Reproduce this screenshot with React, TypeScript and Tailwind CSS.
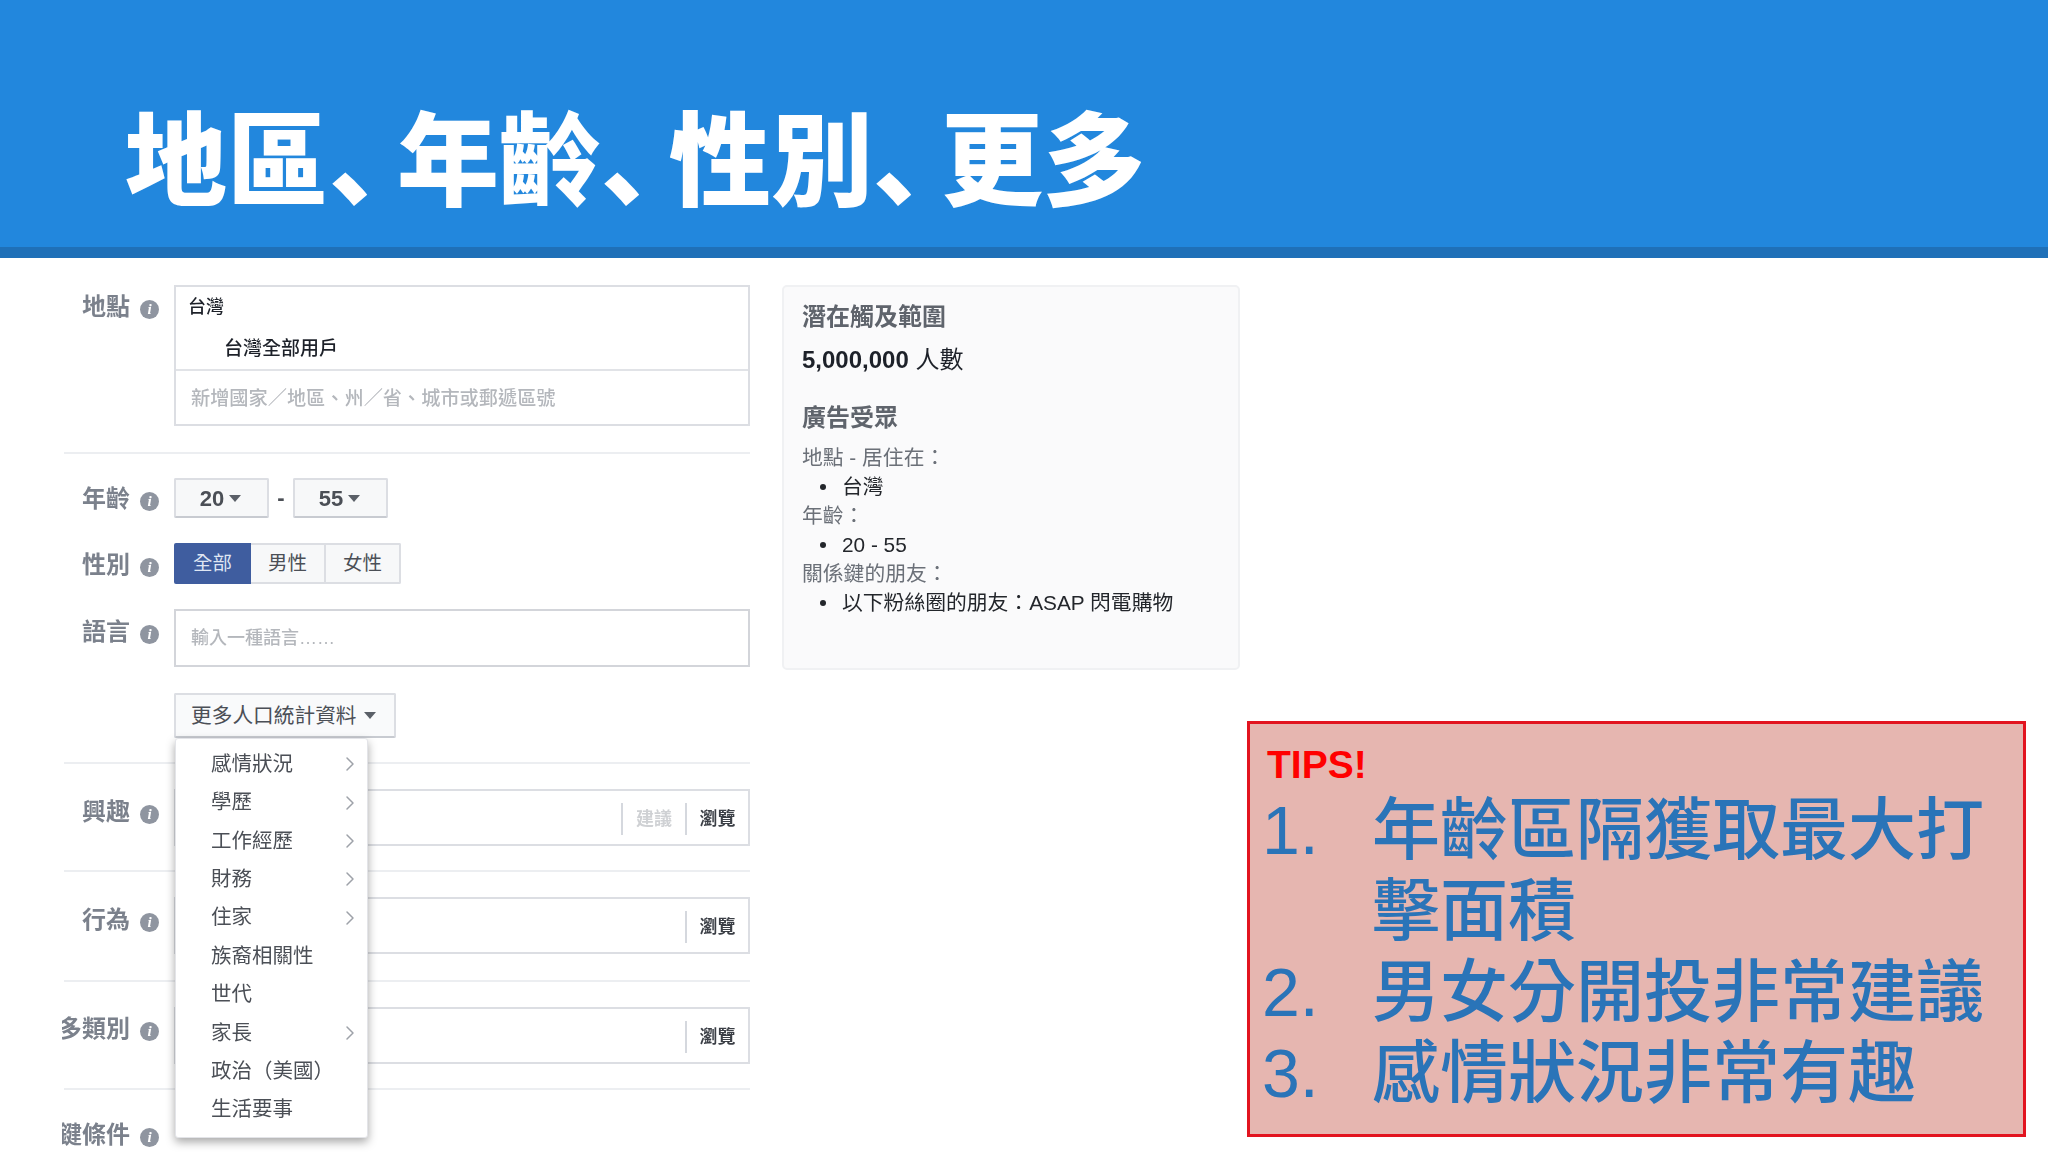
import { ChevronRight } from "lucide-react";

const Info = () => (
  <span className="w-[19px] h-[19px] rounded-full bg-[#8f95a0] text-white flex items-center justify-center text-[15px] leading-none italic font-bold font-['Liberation_Serif',serif] shrink-0 translate-y-[2px]">
    i
  </span>
);

const Caret = () => <span className="w-0 h-0 border-x-[6px] border-x-transparent border-t-[7px] border-t-[#5b6068] inline-block" />;

const Rule = ({ className = "" }: { className?: string }) => <div className={`ml-[2px] w-[686px] h-[2px] bg-[#eceef1] ${className}`} />;

const Row = ({ label, top = 16, children, className = "" }: { label: string; top?: number; children?: React.ReactNode; className?: string }) => (
  <div className={`flex ${className}`}>
    <div className="w-[112px] shrink-0 overflow-hidden flex justify-end pr-[15px]">
      <div className="flex items-center gap-[10px] whitespace-nowrap shrink-0 h-[32px]" style={{ marginTop: top }}>
        <span className="text-[24px] font-bold text-[#7b818c] leading-none">{label}</span>
        <Info />
      </div>
    </div>
    <div className="flex-1 min-w-0">{children}</div>
  </div>
);

const Browse = ({ suggest }: { suggest?: boolean }) => (
  <div className="h-[57px] border-2 border-[#dcdee3] flex items-center justify-end">
    {suggest && (
      <>
        <div className="w-[2px] h-[32px] bg-[#d5d8de] translate-y-[1px]" />
        <span className="w-[62px] text-center text-[18px] font-bold text-[#cfd1d4] pt-[3px]">建議</span>
      </>
    )}
    <div className="w-[2px] h-[32px] bg-[#d5d8de] translate-y-[1px]" />
    <span className="w-[61px] text-center text-[18px] font-bold text-[#3b3f46] pt-[3px]">瀏覽</span>
  </div>
);

const menu: [string, boolean][] = [
  ["感情狀況", true],
  ["學歷", true],
  ["工作經歷", true],
  ["財務", true],
  ["住家", true],
  ["族裔相關性", false],
  ["世代", false],
  ["家長", true],
  ["政治（美國）", false],
  ["生活要事", false],
];

const Btn = ({ text }: { text: string }) => (
  <div className="w-[95px] h-[40px] border-2 border-[#dcdee3] border-b-[#c8cbd1] rounded-[2px] bg-[#f7f8f9] flex items-center justify-center gap-[5px] pr-[2px] text-[22px] text-[#4b4f56] font-bold">
    {text}
    <Caret />
  </div>
);

const Bullet = ({ children }: { children: React.ReactNode }) => (
  <div className="h-[29px] flex items-center text-[#23262b]">
    <span className="w-[6px] h-[6px] rounded-full bg-[#23262b] ml-[18px] mr-[16px]" />
    {children}
  </div>
);

const Tip = ({ n, children }: { n: string; children: React.ReactNode }) => (
  <div className="flex">
    <span className="w-[110px] shrink-0">{n}</span>
    <span className="w-[625px] font-medium">{children}</span>
  </div>
);

const Sep = () => <span className="tracking-[-34px]">、</span>;

export default function App() {
  return (
    <div className="w-[2048px] h-[1152px] overflow-hidden bg-white font-['Liberation_Sans','Noto_Sans_CJK_TC',sans-serif]">
      <header className="h-[258px] bg-[#2287dd] border-b-[11px] border-[#1f70b8] flex items-center pl-[125px]">
        <h1 className="text-[102px] leading-none font-black text-white font-['Noto_Sans_CJK_SC',sans-serif] mt-[60px] whitespace-nowrap" lang="zh-Hans">
          地區<Sep />年齡<Sep />性別<Sep />更多
        </h1>
      </header>

      <div className="flex">
        <div className="w-[688px] ml-[62px] shrink-0 pt-[27px] blur-[0.4px]">
          <Row label="地點" top={6}>
            <div className="h-[141px] border-2 border-[#dcdee3] flex flex-col">
              <div className="h-[84px] border-b-2 border-[#e1e3e7] relative text-[#1d2129]">
                <div className="pl-[12px] pt-[6px] text-[18px] leading-[28px] font-medium">台灣</div>
                <div className="pl-[48px] pt-[14px] text-[19px] leading-[28px] font-medium">台灣全部用戶</div>
              </div>
              <div className="flex-1 flex items-center pl-[15px] pt-[3px] text-[19.2px] font-medium text-[#b4b7bc]">新增國家／地區、州／省、城市或郵遞區號</div>
            </div>
          </Row>
          <Rule className="mt-[26px]" />
          <Row label="年齡" top={5} className="mt-[24px]">
            <div className="flex items-center">
              <Btn text="20" />
              <span className="w-[24px] text-center text-[22px] text-[#4b4f56] font-bold -translate-y-[1px]">-</span>
              <Btn text="55" />
            </div>
          </Row>
          <Row label="性別" top={6} className="mt-[25px]">
            <div className="flex h-[41px] w-[227px] text-[19.5px] text-[#4b4f56]">
              <div className="w-[77px] bg-[#3f5d9f] text-[#dfe6f3] rounded-l-[2px] flex items-center justify-center pt-[1px]">全部</div>
              <div className="w-[75px] border-2 border-l-0 border-[#dcdee3] bg-[#f7f8f9] flex items-center justify-center pt-[1px]">男性</div>
              <div className="w-[75px] border-2 border-l-0 border-[#dcdee3] bg-[#f7f8f9] rounded-r-[2px] flex items-center justify-center pt-[1px]">女性</div>
            </div>
          </Row>
          <Row label="語言" top={7} className="mt-[25px]">
            <div className="h-[58px] border-2 border-[#d3d5da] flex items-center pl-[15px] pt-[1px] text-[18px] font-medium text-[#b4b7bc]">輸入一種語言……</div>
          </Row>
          <div className="mt-[26px] pl-[112px] relative z-10">
            <div className="relative w-[222px]">
              <div className="h-[45px] border-2 border-[#dcdee3] border-b-[#c8cbd1] rounded-[2px] bg-[#f9fafb] flex items-center pl-[15px] gap-[7px] text-[20.7px] text-[#4b4f56]">
                更多人口統計資料
                <Caret />
              </div>
              <ul className="absolute left-[1px] top-full w-[193px] h-[400px] bg-white rounded-[3px] border border-[#e3e4e8] shadow-[0_4px_10px_rgba(0,0,0,0.35)] pt-[6px]">
                {menu.map(([t, more]) => (
                  <li key={t} className="h-[38.4px] pl-[35px] pr-[5px] flex items-center justify-between text-[20.5px] text-[#4b4f56]">
                    {t}
                    {more && <ChevronRight size={24} strokeWidth={1.5} className="text-[#9ea2a9]" />}
                  </li>
                ))}
              </ul>
            </div>
          </div>
          <Rule className="mt-[24px]" />
          <Row label="興趣" top={7} className="mt-[25px]">
            <Browse suggest />
          </Row>
          <Rule className="mt-[24px]" />
          <Row label="行為" top={7} className="mt-[25px]">
            <Browse />
          </Row>
          <Rule className="mt-[26px]" />
          <Row label="更多類別" top={6} className="mt-[25px]">
            <Browse />
          </Row>
          <Rule className="mt-[24px]" />
          <Row label="關係鍵條件" top={5} className="mt-[24px]" />
        </div>

        <div className="ml-[32px] shrink-0 relative">
          <section className="mt-[27px] w-[458px] h-[385px] bg-[#fafafb] border-2 border-[#f0f1f3] rounded-[5px] pl-[18px] pt-[14px] text-[20.8px] blur-[0.3px]">
            <h2 className="text-[24px] leading-[32px] font-bold text-[#5f646c]">潛在觸及範圍</h2>
            <p className="mt-[11px] text-[24px] leading-[32px] text-[#1d2129]">
              <b>5,000,000</b> 人數
            </p>
            <h2 className="mt-[26px] text-[24px] leading-[32px] font-bold text-[#5f646c]">廣告受眾</h2>
            <div className="mt-[9px] text-[#6b7078]">
              <div className="h-[29px] flex items-center">地點 - 居住在：</div>
              <Bullet>台灣</Bullet>
              <div className="h-[29px] flex items-center">年齡：</div>
              <Bullet>20 - 55</Bullet>
              <div className="h-[29px] flex items-center">關係鍵的朋友：</div>
              <Bullet>以下粉絲圈的朋友：ASAP 閃電購物</Bullet>
            </div>
          </section>
          <section className="mt-[51px] ml-[465px] w-[779px] h-[416px] bg-[#e6b6b0] border-[3px] border-[#e2141f] pl-[12px] pt-[19px]">
            <div className="ml-[5px] text-[39px] leading-[44px] font-bold text-[#ff0000]">TIPS!</div>
            <div className="mt-[3px] text-[68px] leading-[81px] text-[#2a74b8]">
              <Tip n="1.">年齡區隔獲取最大打擊面積</Tip>
              <Tip n="2.">男女分開投非常建議</Tip>
              <Tip n="3.">感情狀況非常有趣</Tip>
            </div>
          </section>
        </div>
      </div>
    </div>
  );
}
